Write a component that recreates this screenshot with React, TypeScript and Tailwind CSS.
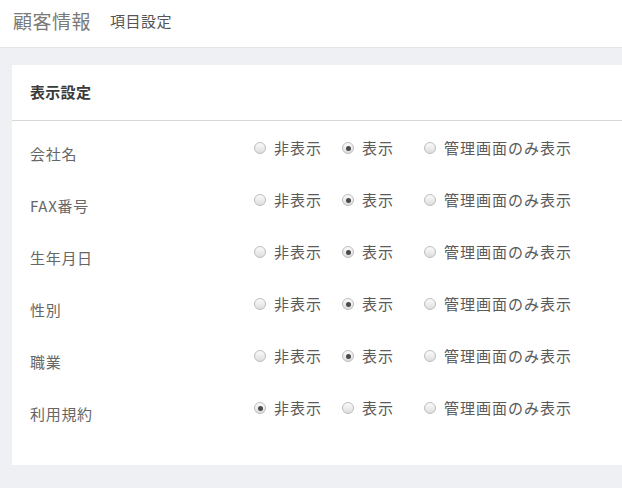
import React from "react";

const rows: { label: string; sel: number }[] = [
  { label: "会社名", sel: 1 },
  { label: "FAX番号", sel: 1 },
  { label: "生年月日", sel: 1 },
  { label: "性別", sel: 1 },
  { label: "職業", sel: 1 },
  { label: "利用規約", sel: 0 },
];

const opts = ["非表示", "表示", "管理画面のみ表示"];
const widths = ["w-[88px]", "w-[82px]", ""];

function Radio({ checked }: { checked: boolean }) {
  return (
    <span className="relative inline-flex h-[12px] w-[12px] shrink-0 items-center justify-center rounded-full border border-[#bdbdbd] bg-gradient-to-b from-[#fbfbfb] to-[#dedede]">
      {checked && <span className="h-[5px] w-[5px] rounded-full bg-[#4a4a4a]" />}
    </span>
  );
}

export default function App() {
  return (
    <div
      className="min-h-[488px] w-[622px] overflow-hidden bg-[#eef0f3] text-[#555]"
      style={{ fontFamily: '"Noto Sans CJK JP", "Noto Sans", sans-serif' }}
    >
      <div className="flex h-[48px] items-start gap-[19px] border-b border-[#e2e4e8] bg-white pl-[13px] pt-[8px]">
        <span className="text-[19px] leading-[26px] tracking-[0.5px] text-[#7a7a7a]">顧客情報</span>
        <span className="text-[15px] leading-[26px] tracking-[0.5px] text-[#555]">項目設定</span>
      </div>
      <div className="ml-[12px] mt-[17px] bg-white">
        <div className="flex h-[56px] items-center border-b border-[#d6dad6] pl-[18px] text-[15px] font-bold tracking-[0.3px] text-[#3a3a3a]">
          表示設定
        </div>
        <div className="pb-[18px] pt-[14px]">
          {rows.map((r) => (
            <div key={r.label} className="flex h-[52px]">
              <div className="w-[242px] pl-[18px] pt-[8px] text-[15px] tracking-[0.7px] text-[#666]">{r.label}</div>
              <div className="flex items-start pt-[3px]">
                {opts.map((o, i) => (
                  <div key={o} className={`flex items-center gap-[8px] ${widths[i]}`}>
                    <Radio checked={r.sel === i} />
                    <span className="text-[15px] leading-[20px] tracking-[1px] text-[#5a5a5a]">{o}</span>
                  </div>
                ))}
              </div>
            </div>
          ))}
        </div>
      </div>
    </div>
  );
}
